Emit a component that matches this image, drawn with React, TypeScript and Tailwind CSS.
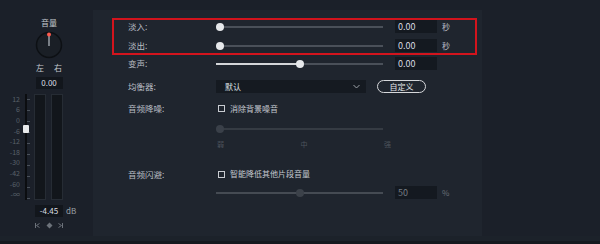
import type { ReactNode } from "react";

const SCALE = ["12", "6", "0", "-6", "-12", "-18", "-30", "-42", "-60", "-∞"];

function Slider({
  value,
  fill = false,
  thumb = "bg-[#e6e8eb]",
  track = "bg-[#4a5059]",
}: {
  value: number;
  fill?: boolean;
  thumb?: string;
  track?: string;
}) {
  const center = Math.max(4, value * 167);
  return (
    <div className="relative flex h-full w-[167px] items-center">
      <div className={`h-[2px] w-full ${track}`} />
      {fill && (
        <div
          className="absolute left-0 h-[2px] bg-[#d4d6d9]"
          style={{ width: center }}
        />
      )}
      <div
        className={`absolute h-[8px] w-[8px] rounded-full ${thumb}`}
        style={{ left: center - 4 }}
      />
    </div>
  );
}

function ValueBox({ value, dim = false }: { value: string; dim?: boolean }) {
  return (
    <div
      className={`ml-[12px] flex h-[13px] w-[42px] items-center bg-[#141920] pl-[3px] text-[9px] leading-none ${
        dim ? "text-[#767c84]" : "text-[#d9dce0]"
      }`}
    >
      {value}
    </div>
  );
}

function Row({
  label,
  h,
  className = "",
  children,
}: {
  label?: string;
  h: string;
  className?: string;
  children?: ReactNode;
}) {
  return (
    <div className={`flex items-center ${h} ${className}`}>
      <div className="w-[88px] text-[8.5px] leading-none text-[#b9bdc4]">
        {label}
      </div>
      {children}
    </div>
  );
}

function Checkbox({ text }: { text: string }) {
  return (
    <div className="flex items-center">
      <div className="ml-[2px] h-[7px] w-[7px] border border-[#c9ccd1]" />
      <span className="ml-[5px] text-[8px] leading-none text-[#c4c8ce]">
        {text}
      </span>
    </div>
  );
}

function Unit({ text, dim = false }: { text: string; dim?: boolean }) {
  return (
    <span
      className={`ml-[5px] text-[8px] leading-none ${
        dim ? "text-[#6a7078]" : "text-[#b9bdc4]"
      }`}
    >
      {text}
    </span>
  );
}

function VolumePanel() {
  return (
    <div className="flex h-full w-[93px] flex-col pt-[19px]">
      {/* Knob */}
      <div className="ml-[17px] flex w-[64px] flex-col items-center">
        <div className="h-[8px] text-[8px] leading-none text-[#c4c8ce]">音量</div>
        <svg width="28" height="28" viewBox="0 0 28 28" className="mt-[4px]">
          <circle cx="14" cy="14" r="12.5" fill="#1a1f26" stroke="#0d1014" strokeWidth="1.5" />
          <line x1="14" y1="3.5" x2="14" y2="15" stroke="#9aa0a7" strokeWidth="1.5" />
          <circle cx="14" cy="3.5" r="2" fill="#ff5a4e" />
        </svg>
        <div className="mt-[5px] flex w-[26px] justify-between text-[8px] leading-none text-[#c4c8ce]">
          <span>左</span>
          <span>右</span>
        </div>
        <div className="mt-[5px] flex h-[12px] w-[27px] items-center justify-center bg-[#12161c] text-[8px] leading-none text-[#dcdfe3]">
          0.00
        </div>
      </div>

      {/* Meter */}
      <div className="mt-[5px] flex h-[106px]">
        <div className="flex w-[21px] flex-col">
          {SCALE.map((s) => (
            <div
              key={s}
              className="flex h-[11px] items-center justify-end pr-[1px] text-[7px] leading-none text-[#59606a]"
            >
              {s}
            </div>
          ))}
        </div>
        <div className="relative ml-[3px] w-[9px]">
          <div className="absolute left-[1px] top-0 h-full w-[2px] bg-[#0b0d10]" />
          {SCALE.map((s, i) => (
            <div
              key={s}
              className="absolute left-[3px] h-[1px] w-[3px] bg-[#4a515a]"
              style={{ top: 5 + i * 11 }}
            />
          ))}
          <div className="absolute left-[-1px] top-[31px] h-[8px] w-[6px] rounded-[1px] bg-[#e8eaec]" />
        </div>
        <div className="ml-[1px] h-full w-[12px] border border-[#262c34] bg-[#12161b]" />
        <div className="ml-[5px] h-full w-[12px] border border-[#262c34] bg-[#12161b]" />
      </div>

      <div className="ml-[35px] mt-[5px] flex items-center">
        <div className="flex h-[12px] w-[28px] items-center justify-center bg-[#12161c] text-[8px] leading-none text-[#dcdfe3]">
          -4.45
        </div>
        <span className="ml-[3px] text-[8px] leading-none text-[#9ba0a7]">dB</span>
      </div>

      <div className="ml-[34px] mt-[5px] flex w-[30px] items-center justify-between">
        <svg width="7" height="7" viewBox="0 0 7 7">
          <path d="M1.5 1v5M5.5 1.5L2.5 3.5l3 2" stroke="#6c727a" strokeWidth="1" fill="none" />
        </svg>
        <svg width="7" height="7" viewBox="0 0 7 7">
          <path d="M3.5 0.5l3 3-3 3-3-3z" fill="#6c727a" />
        </svg>
        <svg width="7" height="7" viewBox="0 0 7 7">
          <path d="M5.5 1v5M1.5 1.5l3 2-3 2" stroke="#6c727a" strokeWidth="1" fill="none" />
        </svg>
      </div>
    </div>
  );
}

export default function App() {
  return (
    <div className="flex h-[244px] w-[600px] flex-col overflow-hidden bg-[#1b2029] font-['Noto_Sans_CJK_SC','Noto_Sans',sans-serif]">
      <div className="flex h-[236px]">
        <VolumePanel />

        <div className="pt-[10px]">
          <div className="flex h-[226px] w-[389px] flex-col bg-[#1f252e] pl-[19px] pt-[8px]">
            {/* Fade in / out (highlighted) */}
            <div className="w-[365px] border-2 border-[#d3141d] pb-[1px] pl-[14px]">
              <Row label="淡入:" h="h-[13px]">
                <Slider value={0} />
                <ValueBox value="0.00" />
                <Unit text="秒" />
              </Row>
              <Row label="淡出:" h="h-[13px]" className="mt-[6px]">
                <Slider value={0} />
                <ValueBox value="0.00" />
                <Unit text="秒" />
              </Row>
            </div>

            <div className="pl-[16px]">
              <Row label="变声:" h="h-[13px]" className="mt-[2px]">
                <Slider value={0.5} fill />
                <ValueBox value="0.00" />
              </Row>

              <Row label="均衡器:" h="h-[13px]" className="mt-[10px]">
                <div className="flex h-[13px] w-[150px] items-center justify-between bg-[#151a21] pl-[9px] pr-[6px]">
                  <span className="text-[8px] leading-none text-[#dfe1e4]">默认</span>
                  <svg width="7" height="5" viewBox="0 0 7 5">
                    <path d="M0.5 1l3 3 3-3" stroke="#9ca1a8" strokeWidth="1" fill="none" />
                  </svg>
                </div>
                <div className="ml-[11px] flex h-[13px] w-[49px] items-center justify-center rounded-full border border-[#d6d8db] text-[8px] leading-none text-[#e3e5e8]">
                  自定义
                </div>
              </Row>

              <Row label="音频降噪:" h="h-[13px]" className="mt-[9px]">
                <Checkbox text="消除背景噪音" />
              </Row>

              <Row h="h-[12px]" className="mt-[8px]">
                <Slider value={0} thumb="bg-[#3a4049]" track="bg-[#353b43]" />
              </Row>

              <Row h="h-[10px]" className="mt-[4px]">
                <div className="flex w-[175px] justify-between pl-[1px] text-[7px] leading-none text-[#4d545d]">
                  <span>弱</span>
                  <span>中</span>
                  <span>强</span>
                </div>
              </Row>

              <Row label="音频闪避:" h="h-[12px]" className="mt-[19px]">
                <Checkbox text="智能降低其他片段音量" />
              </Row>

              <Row h="h-[13px]" className="mt-[6px]">
                <Slider value={0.5} thumb="bg-[#3b4149]" track="bg-[#454b53]" />
                <ValueBox value="50" dim />
                <Unit text="%" dim />
              </Row>
            </div>
          </div>
        </div>

        <div className="flex-1" />
      </div>
      <div className="h-[5px] bg-[#1c222a]" />
      <div className="flex-1 bg-[#15191f]" />
    </div>
  );
}
